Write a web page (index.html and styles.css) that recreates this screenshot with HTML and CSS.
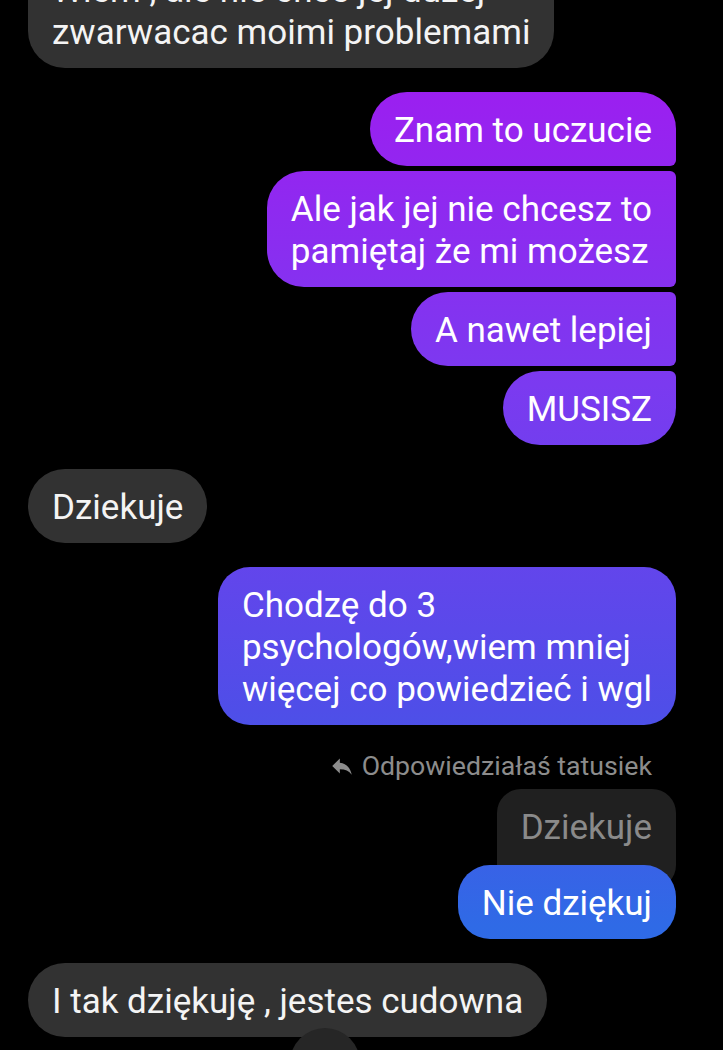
FILE: index.html
```html
<!DOCTYPE html>
<html lang="pl">
<head>
  <meta charset="UTF-8" />
  <meta name="viewport" content="width=device-width, initial-scale=1.0"/>
  <title>Czat</title>
  <link rel="stylesheet" href="styles.css">
</head>
<body>
  <div class="chat">
    <div class="group incoming first-visible">
      <div class="bubble last">Wiem , ale nie chce jej dużej<br>zwarwacac moimi problemami</div>
    </div>

    <div class="group outgoing">
      <div class="bubble first">Znam to uczucie</div>
      <div class="bubble middle">Ale jak jej nie chcesz to<br>pamiętaj że mi możesz</div>
      <div class="bubble middle">A nawet lepiej</div>
      <div class="bubble last">MUSISZ</div>
    </div>

    <div class="group incoming">
      <div class="bubble">Dziekuje</div>
    </div>

    <div class="group outgoing">
      <div class="bubble">Chodzę do 3<br>psychologów,wiem mniej<br>więcej co powiedzieć i wgl</div>
    </div>

    <div class="group outgoing reply">
      <div class="reply-label">
        <svg class="reply-icon" viewBox="0 0 24 24" width="26" height="26">
          <path d="M10 9V5l-7 7 7 7v-4.1c5 0 8.5 1.6 11 5.1-1-5-4-10-11-11z" fill="currentColor"/>
        </svg>
        <span>Odpowiedziałaś tatusiek</span>
      </div>
      <div class="quoted">Dziekuje</div>
      <div class="bubble blue">Nie dziękuj</div>
    </div>

    <div class="group incoming">
      <div class="bubble has-reaction">
        I tak dziękuję , jestes cudowna
        <span class="reaction"></span>
      </div>
    </div>
  </div>
</body>
</html>
```

FILE: styles.css
```css
* {
  box-sizing: border-box;
}

body {
  margin: 0;
  background: #000;
  font-family: Roboto, "Noto Sans", sans-serif;
  color: #fff;
  overflow: hidden;
  height: 1050px;
}

.chat {
  display: flex;
  flex-direction: column;
  gap: 24px;
  padding: 0 47px 0 28px;
  margin-top: -48px;
}

.group {
  display: flex;
  flex-direction: column;
  gap: 5px;
}

.group.incoming {
  align-items: flex-start;
}

.group.outgoing {
  align-items: flex-end;
}

.bubble {
  font-size: 35px;
  line-height: 42px;
  padding: 18px 24px 14px;
  border-radius: 37px;
  white-space: nowrap;
}

.incoming .bubble {
  background: #323232;
  color: #f4f4f4;
}

.incoming .bubble.last {
  border-top-left-radius: 6px;
}

/* messenger style gradient, fixed to the screen */
.outgoing .bubble {
  background: linear-gradient(to bottom,
    #a21af1 0px,
    #9a20f0 100px,
    #7b3af0 385px,
    #4f4ee8 710px,
    #2f6ae6 925px,
    #2a6fe6 1050px);
  background-attachment: fixed;
}

.outgoing .bubble.first {
  border-bottom-right-radius: 6px;
}

.outgoing .bubble.middle {
  border-top-right-radius: 6px;
  border-bottom-right-radius: 6px;
}

.outgoing .bubble.last {
  border-top-right-radius: 6px;
}

.outgoing .bubble:not(.first):not(.middle):not(.last) {
  border-radius: 32px;
}

.outgoing .bubble.blue {
  border-radius: 37px;
  margin-top: -24px;
  position: relative;
}

.reply {
  gap: 0;
}

.reply-label {
  display: flex;
  align-items: center;
  gap: 7px;
  font-size: 26.7px;
  line-height: 34px;
  color: #8c8c8c;
  padding-right: 24px;
  margin-bottom: 6px;
}

.reply-icon {
  color: #8c8c8c;
}

.quoted {
  background: #202020;
  color: #8a8a8a;
  font-size: 35px;
  line-height: 42px;
  padding: 18px 24px 40px;
  border-radius: 24px;
}

.has-reaction {
  position: relative;
}

.reaction {
  position: absolute;
  left: 262px;
  top: 65px;
  width: 70px;
  height: 70px;
  border-radius: 50%;
  background: #262626;
}
```
